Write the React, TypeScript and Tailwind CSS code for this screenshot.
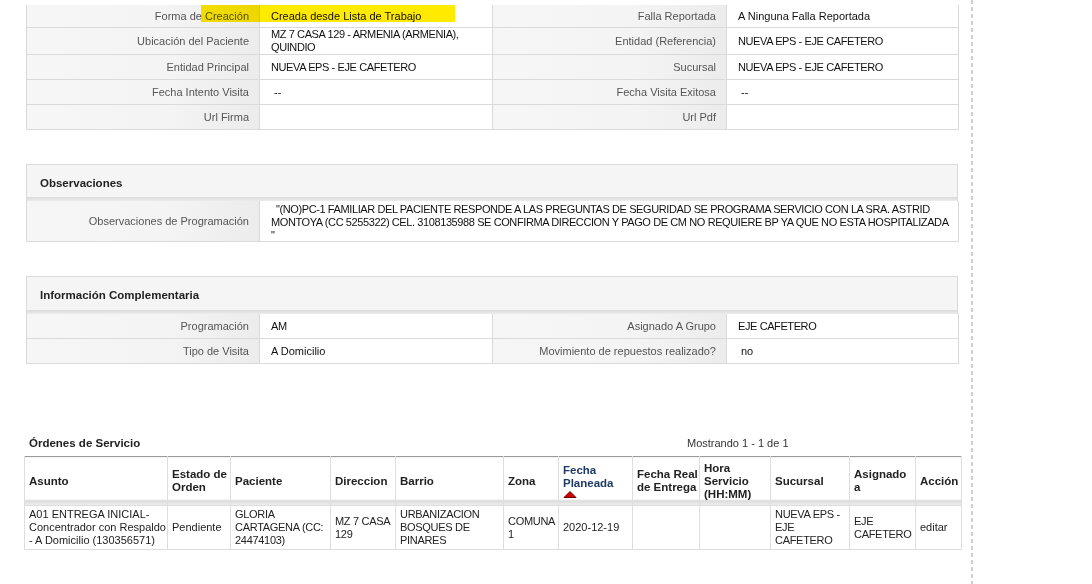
const labelCell =
  "flex items-center justify-end pr-[10px] text-right text-[#555] border-r border-b border-[#dadada] bg-[linear-gradient(to_right,#f6f6f6,#f4f4f4_60%,#ececec)]"
const valueCell = "flex items-center pl-[11px] pr-[8px] text-[#111] border-r border-b border-[#dadada] bg-white"

type Field = { label: string; value: string[]; dash?: boolean }

// values written mostly in capitals render narrower in the original
const isCaps = (v: string[]) => v.join(" ") === v.join(" ").toUpperCase() && /[A-Z]/.test(v.join(""))

const generalRows: Array<{ h: string; left: Field; right: Field }> = [
  {
    h: "h-[23px]",
    left: { label: "Forma de Creación", value: ["Creada desde Lista de Trabajo"] },
    right: { label: "Falla Reportada", value: ["A Ninguna Falla Reportada"] },
  },
  {
    h: "h-[27px]",
    left: { label: "Ubicación del Paciente", value: ["MZ 7 CASA 129 - ARMENIA (ARMENIA),", "QUINDIO"] },
    right: { label: "Entidad (Referencia)", value: ["NUEVA EPS - EJE CAFETERO"] },
  },
  {
    h: "h-[25px]",
    left: { label: "Entidad Principal", value: ["NUEVA EPS - EJE CAFETERO"] },
    right: { label: "Sucursal", value: ["NUEVA EPS - EJE CAFETERO"] },
  },
  {
    h: "h-[25px]",
    left: { label: "Fecha Intento Visita", value: ["--"], dash: true },
    right: { label: "Fecha Visita Exitosa", value: ["--"], dash: true },
  },
  {
    h: "h-[25px]",
    left: { label: "Url Firma", value: [] },
    right: { label: "Url Pdf", value: [] },
  },
]

const complementRows: Array<{ h: string; left: Field; right: Field }> = [
  {
    h: "h-[25px]",
    left: { label: "Programación", value: ["AM"] },
    right: { label: "Asignado A Grupo", value: ["EJE CAFETERO"] },
  },
  {
    h: "h-[25px]",
    left: { label: "Tipo de Visita", value: ["A Domicilio"] },
    right: { label: "Movimiento de repuestos realizado?", value: ["no"], dash: true },
  },
]

function Value({ f, h }: { f: Field; h: string }) {
  return (
    <div className={`${valueCell} ${h} ${f.dash ? "pl-[14px]" : ""}`}>
      <div className={`whitespace-nowrap ${isCaps(f.value) ? "tracking-[-0.4px]" : ""}`}>
        {f.value.map((l, i) => (
          <div key={i}>{l}</div>
        ))}
      </div>
    </div>
  )
}

function FieldGrid({ rows }: { rows: typeof generalRows }) {
  return (
    <div className="grid grid-cols-[233px_233px_234px_232px] border-l border-[#dadada]">
      {rows.map((r, i) => (
        <div key={i} className="contents">
          <div className={`${labelCell} ${r.h}`}>{r.left.label}</div>
          <Value f={r.left} h={r.h} />
          <div className={`${labelCell} ${r.h}`}>{r.right.label}</div>
          <Value f={r.right} h={r.h} />
        </div>
      ))}
    </div>
  )
}

function PanelHeader({ title, h }: { title: string; h: string }) {
  return (
    <div
      className={`${h} flex items-center pl-[13px] text-[11.5px] font-bold text-[#222] border-t border-x border-[#dadada] bg-[linear-gradient(to_bottom,#f5f5f5_88%,#dcdcdc_90%,#ececec)]`}
    >
      {title}
    </div>
  )
}

const columns = [
  { title: ["Asunto"], w: "w-[143px]" },
  { title: ["Estado de", "Orden"], w: "w-[63px]" },
  { title: ["Paciente"], w: "w-[100px]" },
  { title: ["Direccion"], w: "w-[65px]" },
  { title: ["Barrio"], w: "w-[108px]" },
  { title: ["Zona"], w: "w-[55px]" },
  { title: ["Fecha", "Planeada"], w: "w-[74px]", sorted: true },
  { title: ["Fecha Real", "de Entrega"], w: "w-[67px]" },
  { title: ["Hora", "Servicio", "(HH:MM)"], w: "w-[71px]" },
  { title: ["Sucursal"], w: "w-[79px]" },
  { title: ["Asignado", "a"], w: "w-[66px]" },
  { title: ["Acción"], w: "w-[46px]" },
]

const orderRow: string[][] = [
  ["A01 ENTREGA INICIAL-", "Concentrador con Respaldo", "- A Domicilio (130356571)"],
  ["Pendiente"],
  ["GLORIA", "CARTAGENA (CC:", "24474103)"],
  ["MZ 7 CASA", "129"],
  ["URBANIZACION", "BOSQUES DE", "PINARES"],
  ["COMUNA", "1"],
  ["2020-12-19"],
  [],
  [],
  ["NUEVA EPS -", "EJE", "CAFETERO"],
  ["EJE", "CAFETERO"],
  ["editar"],
]

export default function App() {
  return (
    <div className="flex w-[1092px] h-[584px] overflow-hidden bg-white font-['Liberation_Sans',Arial,sans-serif] text-[11px] leading-[13px] text-[#111]">
      <div className="w-[971px] shrink-0 pl-[24px] pt-[5px]">
        {/* Datos generales */}
        <div className="relative ml-[2px] w-[932px]">
          <div className="absolute left-[175px] top-0 w-[254px] h-[17px] bg-[#ffea00] mix-blend-multiply z-10" />
          <FieldGrid rows={generalRows} />
        </div>

        {/* Observaciones */}
        <div className="ml-[2px] w-[932px] mt-[34px]">
          <PanelHeader title="Observaciones" h="h-[37px]" />
          <div className="grid grid-cols-[233px_699px] border-l border-[#dadada]">
            <div className={`${labelCell} h-[41px]`}>Observaciones de Programación</div>
            <div className="h-[41px] pl-[11px] pt-[2px] border-r border-b border-[#dadada] whitespace-nowrap tracking-[-0.4px] text-[#111]">
              <span className="pl-[5px]">"(NO)PC-1 FAMILIAR DEL PACIENTE RESPONDE A LAS PREGUNTAS DE SEGURIDAD SE PROGRAMA SERVICIO CON LA SRA. ASTRID</span>
              <br />
              MONTOYA (CC 5255322) CEL. 3108135988 SE CONFIRMA DIRECCION Y PAGO DE CM NO REQUIERE BP YA QUE NO ESTA HOSPITALIZADA
              <br />"
            </div>
          </div>
        </div>

        {/* Información Complementaria */}
        <div className="ml-[2px] w-[932px] mt-[34px]">
          <PanelHeader title="Información Complementaria" h="h-[38px]" />
          <FieldGrid rows={complementRows} />
        </div>

        {/* Órdenes de Servicio */}
        <div className="mt-[73px] flex w-[937px]">
          <div className="w-[663px] pl-[5px] text-[11.5px] font-bold text-[#222]">Órdenes de Servicio</div>
          <div className="text-[#333]">Mostrando 1 - 1 de 1</div>
        </div>
        <table className="mt-[6px] w-[937px] table-fixed border-collapse border-t border-t-[#9a9a9a]">
          <colgroup>
            {columns.map((c, i) => (
              <col key={i} className={c.w} />
            ))}
          </colgroup>
          <thead>
            <tr>
              {columns.map((c, i) => (
                <th
                  key={i}
                  className={`h-[49px] pl-[4px] pr-[1px] text-left align-middle text-[11.5px] font-bold whitespace-nowrap border-x border-[#dedede] bg-[linear-gradient(to_bottom,#fff_88%,#d9d9d9_89%,#efefef)] ${c.sorted ? "text-[#1f3a66]" : "text-[#222]"}`}
                >
                  {c.title.map((l, j) => (
                    <div key={j}>{l}</div>
                  ))}
                  {c.sorted && (
                    <svg width="14" height="7" viewBox="0 0 14 7" className="block mt-[1px]">
                      <polygon points="1,6.5 7,0.5 13,6.5" fill="#d40000" stroke="#6b0000" strokeWidth="1" />
                    </svg>
                  )}
                </th>
              ))}
            </tr>
          </thead>
          <tbody>
            <tr>
              {orderRow.map((v, i) => (
                <td
                  key={i}
                  className={`h-[44px] pl-[4px] pr-[1px] align-middle whitespace-nowrap text-[#222] border border-[#dedede] ${i !== 0 && isCaps(v) ? "tracking-[-0.3px]" : ""}`}
                >
                  {v.map((l, j) => (
                    <div key={j}>{l}</div>
                  ))}
                </td>
              ))}
            </tr>
          </tbody>
        </table>
      </div>
      <div className="w-[2px] h-full shrink-0 bg-[repeating-linear-gradient(to_bottom,#d0d0d0_0px,#d0d0d0_4px,transparent_4px,transparent_7px)]" />
    </div>
  )
}
